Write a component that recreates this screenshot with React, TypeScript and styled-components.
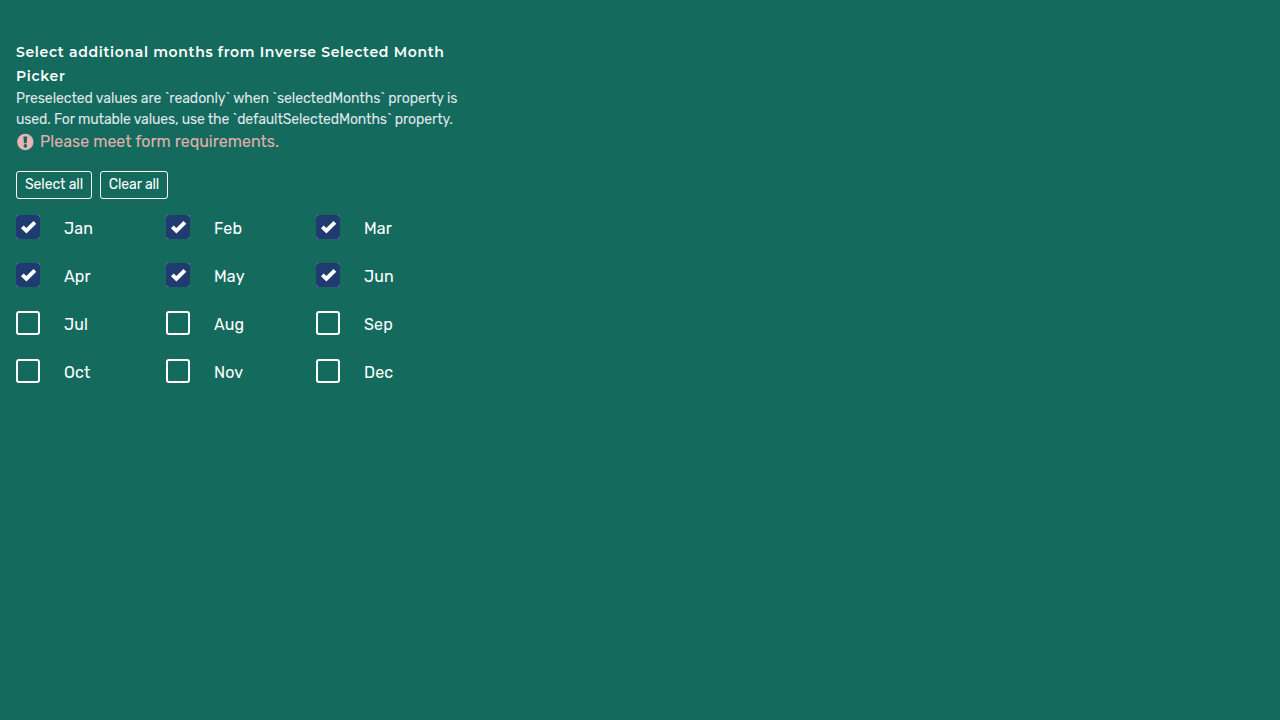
import React, { useState } from 'react';
import styled, { createGlobalStyle } from 'styled-components';

const GlobalStyle = createGlobalStyle`
  *, *::before, *::after { box-sizing: border-box; }
  html { background: #146b5d; }
  body { margin: 0; color: #fff; font: 400 16px/24px Rubik, Roboto, sans-serif; }
`;

const Fieldset = styled.fieldset`
  width: 450px;
  margin: 40px 16px 0;
  padding: 0;
  border: 0;
`;

const Label = styled.div`
  font: 600 14px/24px Montserrat, Inter, sans-serif;
`;

const Line = styled.span<{ $tracking?: number }>`
  display: block;
  white-space: nowrap;
  letter-spacing: ${({ $tracking = 0 }) => $tracking}px;
`;

const Help = styled.div`
  font-size: 14px;
  line-height: 21px;
  color: #e0e7ed;
`;

const ErrorMessage = styled.div`
  display: flex;
  align-items: center;
  gap: 5px;
  height: 24px;
  color: #e3b1b0;
`;

const Actions = styled.div`
  display: flex;
  gap: 8px;
  margin-top: 17px;
`;

const ActionButton = styled.button<{ $width: number }>`
  width: ${({ $width }) => $width}px;
  height: 28px;
  padding: 0 0 1px;
  border: 1px solid #fff;
  border-radius: 3px;
  background: transparent;
  color: #fff;
  font: 400 14px/21px Rubik, Roboto, sans-serif;
  letter-spacing: -0.1px;
  white-space: nowrap;
`;

const Months = styled.div`
  display: grid;
  grid-template-columns: repeat(3, 150px);
  grid-auto-rows: 48px;
  margin-top: 16px;
`;

const Month = styled.label`
  display: flex;
  align-items: flex-start;
  gap: 24px;
  line-height: 27px;
`;

const Box = styled.button`
  display: flex;
  align-items: center;
  justify-content: center;
  width: 24px;
  height: 24px;
  padding: 0;
  border: 2px solid #fff;
  border-radius: 3px;
  background: transparent;
`;

const Fill = styled.span`
  display: flex;
  flex: none;
  align-items: center;
  justify-content: center;
  width: 24px;
  height: 24px;
  border-radius: 3px;
  background: #1f3b70;
`;

const names = ['Jan', 'Feb', 'Mar', 'Apr', 'May', 'Jun', 'Jul', 'Aug', 'Sep', 'Oct', 'Nov', 'Dec'];

export default function App() {
  const [selected, setSelected] = useState(names.map((_, i) => i < 6));
  const toggle = (i: number) => setSelected(selected.map((v, j) => (j === i ? !v : v)));
  return (
    <>
      <GlobalStyle />
      <Fieldset>
        <Label>
          <Line $tracking={0.67}>Select additional months from Inverse Selected Month</Line>
          <Line $tracking={0.67}>Picker</Line>
        </Label>
        <Help>
          <Line $tracking={-0.07}>Preselected values are `readonly` when `selectedMonths` property is</Line>
          <Line $tracking={-0.12}>used. For mutable values, use the `defaultSelectedMonths` property.</Line>
        </Help>
        <ErrorMessage>
          <svg width="19" height="19" viewBox="0 0 19 19">
            <circle cx="9.3" cy="9" r="8.2" fill="#e8b4b4" />
            <path d="M7.4 3.6h3.8l-.5 6.6H7.9z" fill="#146b5d" />
            <circle cx="9.3" cy="12.9" r="1.8" fill="#146b5d" />
          </svg>
          <Line $tracking={0.02}>Please meet form requirements.</Line>
        </ErrorMessage>
        <Actions>
          <ActionButton $width={76} onClick={() => setSelected(names.map(() => true))}>Select all</ActionButton>
          <ActionButton $width={68} onClick={() => setSelected(names.map(() => false))}>Clear all</ActionButton>
        </Actions>
        <Months>
          {names.map((name, i) => (
            <Month key={name}>
              <Box type="button" role="checkbox" aria-checked={selected[i]} aria-label={name} onClick={() => toggle(i)}>
                {selected[i] && (
                  <Fill>
                    <svg width="20" height="20" viewBox="0 0 20 20">
                      <path d="M4.3 9.8 8.4 13.7 16.9 5.3" fill="none" stroke="#fff" strokeWidth="3.9" />
                    </svg>
                  </Fill>
                )}
              </Box>
              <Line $tracking={0.15}>{name}</Line>
            </Month>
          ))}
        </Months>
      </Fieldset>
    </>
  );
}
